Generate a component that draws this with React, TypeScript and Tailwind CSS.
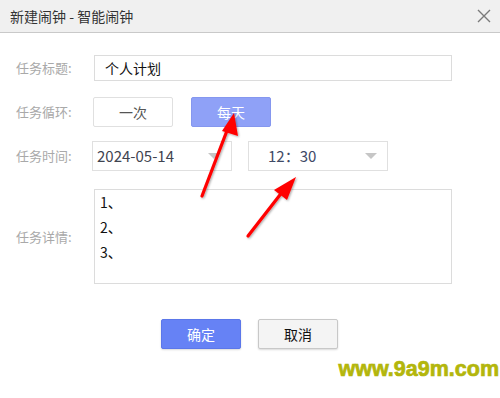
import React from "react";

const cjk = "font-['Noto_Sans_CJK_SC','Noto_Sans',sans-serif]";

function Caret() {
  return (
    <svg width="12" height="6" viewBox="0 0 12 6" className="shrink-0">
      <polygon points="0,0 12,0 6,6" fill="#c6c6c6" />
    </svg>
  );
}

function Label({ children }: { children: React.ReactNode }) {
  return (
    <div className={`w-[78px] shrink-0 text-[13px] text-[#a9a9a9] ${cjk}`}>{children}</div>
  );
}

export default function App() {
  return (
    <div className={`relative w-[500px] h-[398px] bg-white overflow-hidden ${cjk}`}>
      {/* Header */}
      <div className="h-[33px] bg-[#f0f0f0] border-b border-[#c9c9c9] flex items-center justify-between pl-[10px] pr-[9px]">
        <span className="text-[14px] text-[#333] leading-none">新建闹钟 - 智能闹钟</span>
        <svg width="14" height="14" viewBox="0 0 14 14">
          <path d="M1 1 L13 13 M13 1 L1 13" stroke="#7a7a7a" strokeWidth="1.4" />
        </svg>
      </div>

      {/* Body */}
      <div className="flex flex-col pl-[16px]">
        <div className="flex items-center mt-[22px]">
          <Label>任务标题:</Label>
          <div className="w-[358px] h-[26px] border border-[#dcdcdc] flex items-center pl-[10px] text-[14px] text-[#111]">
            个人计划
          </div>
        </div>

        <div className="flex items-center mt-[16px]">
          <div className={`w-[77px] shrink-0 text-[13px] text-[#a9a9a9]`}>任务循环:</div>
          <div className="w-[80px] h-[30px] border border-[#e0e0e0] rounded-[2px] flex items-center justify-center text-[14px] text-[#555]">
            一次
          </div>
          <div className="ml-[18px] w-[80px] h-[30px] bg-[#8fa1f7] border border-[#8597ef] rounded-[2px] flex items-center justify-center text-[14px] text-white">
            每天
          </div>
        </div>

        <div className="flex items-center mt-[14px]">
          <div className={`w-[76px] shrink-0 text-[13px] text-[#a9a9a9]`}>任务时间:</div>
          <div className="w-[140px] h-[30px] border border-[#e0e0e0] flex items-center justify-between pl-[4px] pr-[11px]">
            <span className="text-[15px] text-[#3f4450]">2024-05-14</span>
            <Caret />
          </div>
          <div className="ml-[16px] w-[140px] h-[30px] border border-[#e0e0e0] flex items-center justify-between pl-[19px] pr-[10px]">
            <span className="text-[15px] text-[#3f4a66]">12：30</span>
            <Caret />
          </div>
        </div>

        <div className="flex items-center mt-[18px]">
          <Label>任务详情:</Label>
          <div className="w-[358px] h-[95px] border border-[#dcdcdc] pl-[5px] text-[14px] text-[#111] leading-[25px]">
            <div>1、</div>
            <div>2、</div>
            <div>3、</div>
          </div>
        </div>

        <div className="flex items-center mt-[35px] pl-[145px] gap-[17px]">
          <div className="w-[80px] h-[30px] bg-[#6682f5] border border-[#5b77ea] rounded-[2px] shadow-[0_1px_2px_rgba(0,0,0,0.15)] flex items-center justify-center text-[14px] text-white">
            确定
          </div>
          <div className="w-[80px] h-[30px] bg-[#f4f4f4] border border-[#c8c8c8] rounded-[2px] shadow-[0_1px_2px_rgba(0,0,0,0.15)] flex items-center justify-center text-[14px] text-[#111]">
            取消
          </div>
        </div>

        <div className="flex justify-end mt-[7px] pr-[1px]">
          <span className="font-['Liberation_Sans',sans-serif] font-bold text-[21.5px] leading-[26px] text-[#b3b60c] [-webkit-text-stroke:0.7px_#b3b60c]">
            www.9a9m.com
          </span>
        </div>
      </div>

      {/* Red annotation arrows */}
      <svg className="absolute inset-0 pointer-events-none" width="500" height="398" viewBox="0 0 500 398">
        <defs>
          <filter id="sh" x="-20%" y="-20%" width="140%" height="140%">
            <feDropShadow dx="1" dy="1" stdDeviation="1" floodColor="#000" floodOpacity="0.35" />
          </filter>
        </defs>
        <g filter="url(#sh)">
          <line x1="202" y1="196" x2="228" y2="128" stroke="#ff0000" strokeWidth="3.2" strokeLinecap="round" />
          <polygon points="234,113 238,136 222,131" fill="#ff0000" />
          <line x1="248" y1="236" x2="283" y2="191" stroke="#ff0000" strokeWidth="3.2" strokeLinecap="round" />
          <polygon points="296,177 287,200 274,190" fill="#ff0000" />
        </g>
      </svg>
    </div>
  );
}
